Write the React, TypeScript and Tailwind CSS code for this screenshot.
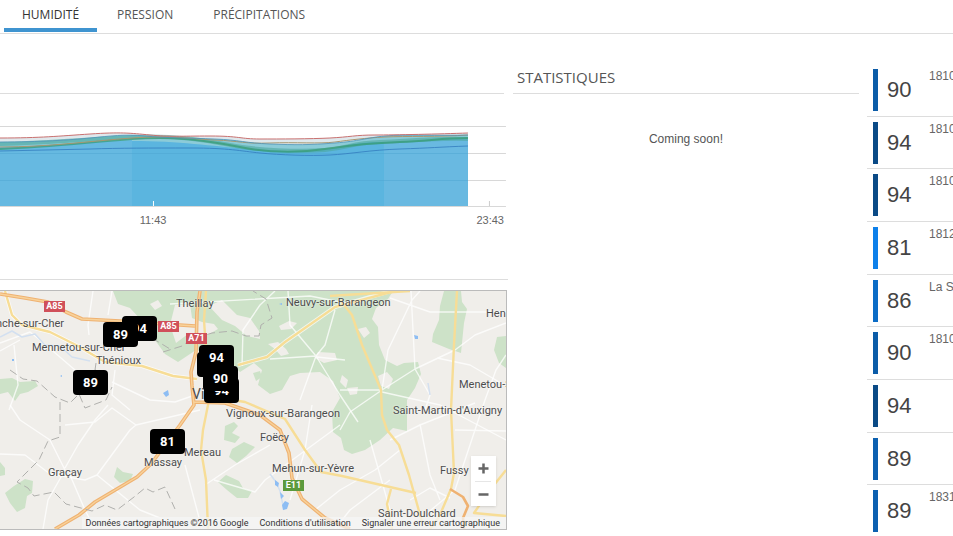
const tabs = ['HUMIDITÉ', 'PRESSION', 'PRÉCIPITATIONS']

const stations = [
  { value: 90, name: '1810', color: 'bg-[#0b5ca8]' },
  { value: 94, name: '1810', color: 'bg-[#0a4a86]' },
  { value: 94, name: '1810', color: 'bg-[#0a4a86]' },
  { value: 81, name: '1812', color: 'bg-[#0d80ea]' },
  { value: 86, name: 'La S', color: 'bg-[#0b6cc6]' },
  { value: 90, name: '1810', color: 'bg-[#0b5ca8]' },
  { value: 94, name: '', color: 'bg-[#0a4a86]' },
  { value: 89, name: '', color: 'bg-[#0c60b0]' },
  { value: 89, name: '1831', color: 'bg-[#0c60b0]' },
]

const places = [
  { name: 'Theillay', pos: 'left-[176px] top-[5px]' },
  { name: 'Neuvy-sur-Barangeon', pos: 'left-[286px] top-[4px]' },
  { name: 'Hen', pos: 'left-[486px] top-[15px]' },
  { name: 'nche-sur-Cher', pos: 'left-[-4px] top-[25px]' },
  { name: 'Mennetou-sur-Cher', pos: 'left-[32px] top-[49px]' },
  { name: 'Thénioux', pos: 'left-[96px] top-[62px]' },
  { name: 'Menetou-S', pos: 'left-[459px] top-[86px]' },
  { name: "Saint-Martin-d'Auxigny", pos: 'left-[393px] top-[112px]' },
  { name: 'Vignoux-sur-Barangeon', pos: 'left-[226px] top-[115px]' },
  { name: 'Foëcy', pos: 'left-[260px] top-[139px]' },
  { name: 'Mereau', pos: 'left-[184px] top-[154px]' },
  { name: 'Massay', pos: 'left-[144px] top-[164px]' },
  { name: 'Mehun-sur-Yèvre', pos: 'left-[272px] top-[170px]' },
  { name: 'Graçay', pos: 'left-[48px] top-[174px]' },
  { name: 'Fussy', pos: 'left-[440px] top-[172px]' },
  { name: 'Saint-Doulchard', pos: 'left-[378px] top-[215px]' },
]

const shields = [
  { name: 'A85', pos: 'left-[44px] top-[10px] bg-[#d0505a]' },
  { name: 'A85', pos: 'left-[158px] top-[30px] bg-[#d0505a]' },
  { name: 'A71', pos: 'left-[186px] top-[42px] bg-[#d0505a]' },
  { name: 'E11', pos: 'left-[283px] top-[189px] bg-[#5c9a3c]' },
]

const markers = [
  { value: 94, pos: 'left-[122px] top-[25px]' },
  { value: 89, pos: 'left-[103px] top-[31px]' },
  { value: 89, pos: 'left-[73px] top-[79px]' },
  { value: '', pos: 'left-[197px] top-[61px]' },
  { value: 94, pos: 'left-[199px] top-[54px]' },
  { value: 94, pos: 'left-[204px] top-[87px]' },
  { value: 90, pos: 'left-[203px] top-[75px]' },
  { value: 81, pos: 'left-[150px] top-[138px]' },
]

const top = 'M0 138C40 138 60 136 90 134S130 133 150 135S180 136 210 136S240 139 260 139S310 139 330 138S355 135 375 135S440 134 468 133'
const mid = 'M0 142C40 142 70 140 90 138S125 134 145 136S190 138 215 139S245 143 270 144S310 145 335 143S365 138 385 136S440 136 468 135'
const low = 'M0 151C30 150 60 150 90 149S150 148 190 148S240 151 260 153S310 156 330 155S370 150 400 149S440 147 468 146'

function Chart() {
  return (
    <svg className="block h-[92px] w-full" viewBox="0 116 508 92" preserveAspectRatio="none" fill="none">
      <path d="M0 126.500H506M0 153.500H506M0 180.500H506M0 206.500H506" stroke="#d8d8d8" />
      <path d={top + 'V206H0Z'} fill="#dfe8ec" />
      <path d={mid + 'V206H0Z'} fill="#8ccbd8" />
      <path d={low + 'V206H0Z'} fill="#5bb5df" />
      <path d="M0 147C50 146 80 142 132 140V206H0Z" fill="#66b9e1" />
      <path d="M384 142L468 138V206H384Z" fill="#69b9e1" />
      <path d="M132 141C180 141 210 146 250 149S320 152 340 147S370 142 384 142V206H132Z" fill="#5bb5df" />
      <path d="M0 153.500H468M0 180.500H468" stroke="#4fa5d0" strokeOpacity=".5" />
      <path d="M0 144C50 143 90 139 132 137S205 140 230 145S300 152 325 150S350 143 380 142S430 138 468 139" stroke="#4da99f" strokeWidth="4" strokeOpacity=".6" />
      <path d="M0 149C50 147 90 142 132 139S205 140 240 147S305 152 325 149S370 143 400 142S440 138 468 138" stroke="#349a70" strokeWidth="2" strokeOpacity=".7" />
      <path d="M0 147C50 147 90 141 132 138S190 139 215 140S245 144 270 143S320 144 335 142S365 138 385 137S440 137 468 135" stroke="#a89870" />
      <path d={mid} stroke="#4c93b8" strokeOpacity=".8" />
      <path d={low} stroke="#357fc0" strokeOpacity=".85" />
      <path d={top} stroke="#c9706f" />
      <path d="M153.500 201V206" stroke="#fff" />
      <path d="M489.500 201V206" stroke="#ccc" />
    </svg>
  )
}

function Terrain() {
  return (
    <svg className="absolute inset-0 h-full w-full" viewBox="0 291 506 238" preserveAspectRatio="xMinYMin slice" fill="none" strokeLinejoin="round">
      <path d="M0 291H506V529H0Z" fill="#f0eeea" />
      <g fill="#cde2c8">
        <path d="M113 291H393L388 299L376 308L372 319L378 327L379 345L385 360L397 366L404 363L418 362L421 374L415 388L407 400V431L393 428L380 440L365 450L352 454L344 450L341 438L333 432L332 412L340 398L333 381L320 372L300 373L290 376L282 390L270 394L258 385L262 370L254 363L240 372L228 360L196 350L178 362L165 354L155 340L143 322L130 308L118 304Z" />
        <path d="M444 291H461L462 302L467 309L464 323L461 353L449 349L432 342L433 334L439 320L440 306Z" />
        <path d="M497 337L506 336V368L499 363L494 350Z" />
        <path d="M0 379L12 378L20 382L35 381L38 386L28 392L20 394L15 401L8 392L0 394Z" />
        <path d="M14 486L25 479L33 481L32 493L27 496L25 508L17 512L10 503L5 493ZM0 462L5 468V475L0 476Z" />
        <path d="M117 467L123 472L133 474L130 481L120 483L114 477Z" />
        <path d="M225 426L234 422L238 426L232 433L240 437L235 443L224 440ZM232 449L244 442L255 447L246 456L237 463L229 457ZM218 482L226 475L239 481L243 488L252 491L248 498L237 498L227 490Z" />
      </g>
      <g fill="#f0eeea">
        <path d="M209 306L222 300L237 315L250 318L259 331L260 339L247 336L235 326L222 320Z" />
        <path d="M175 305L190 304L192 318L202 322L214 324L218 329L204 337L188 334L176 343L170 325Z" />
        <path d="M279 326L289 321L297 323L291 329L281 330ZM268 344L278 342L286 349L289 354L281 356L275 349ZM358 329L366 327L370 333L364 338ZM318 352L335 353L337 360L324 363L315 358ZM378 376L387 372L393 379L389 389L381 386ZM347 388L358 387L357 394L350 395ZM342 375L348 380L346 388L340 382ZM150 304L158 300L162 306L155 310Z" />
      </g>
      <path d="M253 373L260 371L262 377L256 381Z" fill="#cde2c8" />
      <g stroke="#fff" strokeWidth="1.400" strokeOpacity=".75">
        <path d="M93 291L88 325L89 335M0 343L30 332L40 340L75 370L85 378M14 345L18 385L9 410M0 351L20 340M112 291L108 315M115 370L112 395L130 410M112 382L150 400L175 402L195 395" />
        <path d="M10 405L20 420L50 440L65 470L48 500L43 529M0 454L25 455L50 474L85 480L97 475L130 430L136 425L200 410M97 475L140 510L165 520M65 468L78 445L95 420L108 405M65 425L95 422L112 408L136 425" />
        <path d="M70 475L85 510L95 529M214 480L255 492L265 480L340 425M185 465L197 510L202 529M205 485L235 465L270 445" />
        <path d="M242 366L243 330L260 305L275 291M170 304L310 296L345 303M335 310L325 345L316 356L270 359M316 356L290 325L288 291M316 356L340 395L358 422M316 356L300 400M317 357L345 360" />
        <path d="M382 390L415 369L455 350L475 335L506 323M382 390L388 350L412 300L420 291M411 291L415 369L430 395L425 410M390 298L410 305L430 312L506 312M382 390L340 390M382 390L350 412L340 430M437 358L470 365L506 386M382 392L440 405L506 440" />
        <path d="M506 355L496 370L485 400L470 445L455 490L425 515M400 450L375 470L340 490L315 510M390 440L420 425L475 403M420 424L430 475L440 500M370 440L380 475L390 510M455 430L506 431M312 405L305 450L290 500M390 480L350 510L335 529M410 500L430 488L450 498" />
      </g>
      <g stroke="#fff" strokeWidth="4" strokeOpacity=".7">
        <path d="M5 291L12 315L22 325L50 332L78 346L105 362L142 366L173 376L197 379" />
        <path d="M238 365L267 357L285 342L335 307L391 291" />
      </g>
      <g stroke="#f7dd96" strokeWidth="2.400">
        <path d="M5 291L12 315L22 325L50 332L78 346L105 362L142 366L173 376L197 379" />
        <path d="M238 365L267 357L285 342L335 307L395 291M340 300L352 315L362 345L381 390L382 415L387 430L399 445L409 475L422 522" />
        <path d="M206 291L204 320L206 350M209 400L203 430L201 450L206 480L208 529M215 397L245 402L285 419L305 450L321 472L342 476L416 493M457 291L454 345L451 410L454 473L451 489L439 517L430 529M391 489L387 504L392 529M506 470L490 490L474 513L506 516M330 296L345 295L410 291" />
      </g>
      <g stroke="#efb272" strokeWidth="3.600">
        <path d="M0 294L25 298L48 302L66 312L82 319L120 321L195 326" />
        <path d="M200 291L197 312L196 352L191 372L192 386L194 405L180 425L151 464L137 477L95 502L79 515L55 529M194 402L225 403L260 415L280 430L289 453L292 478L302 499L325 518L350 529" />
        <path d="M450 489L463 497L468 506L463 518L464 529" strokeWidth="2.600" />
      </g>
      <g stroke="#f8d29a" strokeWidth="1.400">
        <path d="M0 294L25 298L48 302L66 312L82 319L120 321L195 326M200 291L197 312L196 352L191 372L192 386L194 405L180 425L151 464L137 477L95 502L79 515L55 529M194 402L225 403L260 415L280 430L289 453L292 478L302 499L325 518" />
      </g>
      <g stroke="#b0b0ad" strokeDasharray="8 4">
        <path d="M10 370L23 379L37 381L55 397L70 403L79 394L85 408L106 400L112 387M60 402L60 437L48 441L39 460L17 482L28 488L34 496L54 492L66 504L92 511L105 505L117 510L134 497L145 488L153 492L165 487L175 509" />
        <path d="M163 352L182 346L190 340L212 333L232 331L246 336L259 336L261 325L272 318L266 299L253 291M152 338L170 349M96 363L95 370L104 372" />
      </g>
      <g stroke="#d3e0f0" strokeWidth="1.500">
        <path d="M0 337L12 331L22 337L35 334L45 345L60 346L72 357L90 361M270 474L276 482L280 491L284 510M428 383L430 395M262 441L267 437" />
      </g>
      <g fill="#8dbdf3">
        <path d="M414 335L418 336L418 339L415 339ZM163 393L168 390L169 395L166 397ZM275 480L279 483L278 487L275 485ZM280 492L284 496L281 499ZM282 505L285 501L289 503L287 509L283 510ZM12 359L14 359V361H12ZM279 304L282 303V305ZM60 376L62 375V377Z" />
      </g>
    </svg>
  )
}

function StationMap() {
  return (
    <div className="relative mr-px h-60 overflow-hidden border-y border-r border-[#bbb]">
      <Terrain />
      {places.map(p => (
        <span key={p.name} className={`absolute whitespace-nowrap font-[Roboto,sans-serif] text-[11px] leading-4 text-[#4c4c4c] [text-shadow:0_0_2px_#fff] ${p.pos}`}>{p.name}</span>
      ))}
      <span className="absolute left-[192px] top-[95px] font-[Roboto,sans-serif] text-sm leading-4 text-[#4c4c4c]">Vi</span>
      {shields.map((s, i) => (
        <span key={i} className={`absolute h-[11px] w-[21px] text-center font-[Roboto,sans-serif] text-[9px] font-bold leading-[11px] text-white ${s.pos}`}>{s.name}</span>
      ))}
      {markers.map((m, i) => (
        <span key={i} className={`absolute h-[25px] w-[35px] rounded bg-black text-center font-[Roboto,sans-serif] text-[13px] font-bold leading-[25px] text-white ${m.pos}`}>{m.value}</span>
      ))}
      <div className="absolute bottom-[23px] right-[10px] flex w-[25px] flex-col items-center bg-white shadow-sm">
        <button aria-label="Zoom avant" className="flex h-[25px] w-full items-center justify-center">
          <svg width="11" height="11" viewBox="0 0 11 11" stroke="#666" strokeWidth="2.500"><path d="M0.500 5.500H10.500M5.500 0.500V10.500" /></svg>
        </button>
        <span className="h-px w-4 bg-[#e6e6e6]" />
        <button aria-label="Zoom arrière" className="flex h-6 w-full items-center justify-center">
          <svg width="11" height="11" viewBox="0 0 11 11" stroke="#666" strokeWidth="2.500"><path d="M0.500 5.500H10.500" /></svg>
        </button>
      </div>
      <div className="absolute bottom-0 right-0 flex h-3 items-center gap-[11px] bg-[#f5f5f5]/75 pl-1 pr-1.5 font-[Roboto,sans-serif] text-[9px] leading-3 text-[#333]">
        <span>Données cartographiques ©2016 Google</span>
        <a href="#conditions">Conditions d'utilisation</a>
        <a href="#signaler">Signaler une erreur cartographique</a>
      </div>
    </div>
  )
}

export default function App() {
  return (
    <div className="flex h-screen flex-col overflow-hidden bg-white font-['Liberation_Sans',Arial,sans-serif] text-xs text-[#555]">
      <nav className="flex h-[34px] shrink-0 items-start border-b border-[#ddd] pl-1 font-['Open_Sans',sans-serif]">
        {tabs.map((tab, i) => (
          <button key={tab} className={i === 0 ? 'h-8 border-b-4 border-[#3f94d0] px-[18px] pt-0.5 text-[#333]' : 'h-8 border-b-4 border-transparent px-5 pt-0.5'}>{tab}</button>
        ))}
      </nav>
      <main className="flex items-start">
        <section className="w-[53.300%] shrink-0">
          <div className="mr-1 h-[60px] border-b border-[#ddd]" />
          <div className="pt-[22px]">
            <Chart />
            <div className="flex justify-between pl-[27.500%] pr-1 pt-1 text-[11px] leading-4 text-[#666]">
              <span>11:43</span>
              <span>23:43</span>
            </div>
          </div>
          <div className="mb-[10px] h-[52px] border-b border-[#ddd]" />
          <StationMap />
        </section>
        <section className="ml-[5px] mr-2 min-w-0 flex-1">
          <h2 className="flex h-[60px] items-end border-b border-[#ddd] pb-1.5 pl-1 font-['Open_Sans',sans-serif] text-[15px] leading-5 text-[#555]">STATISTIQUES</h2>
          <p className="pt-9 text-center leading-[18px]">Coming soon!</p>
        </section>
        <ul className="mt-[30px] grid h-[474px] w-[86px] shrink-0 auto-rows-fr overflow-hidden">
          {stations.map((s, i) => (
            <li key={i} className="flex items-start border-b border-[#ddd] pl-1.5 pt-[5px]">
              <span className={`h-[42px] w-[5px] shrink-0 ${s.color}`} />
              <span className="w-[51px] shrink-0 pl-[9px] pt-[7px] text-[22px] leading-7 text-[#444]">{s.value}</span>
              <span className="whitespace-nowrap leading-[14px] text-[#666]">{s.name}</span>
            </li>
          ))}
        </ul>
      </main>
    </div>
  )
}
